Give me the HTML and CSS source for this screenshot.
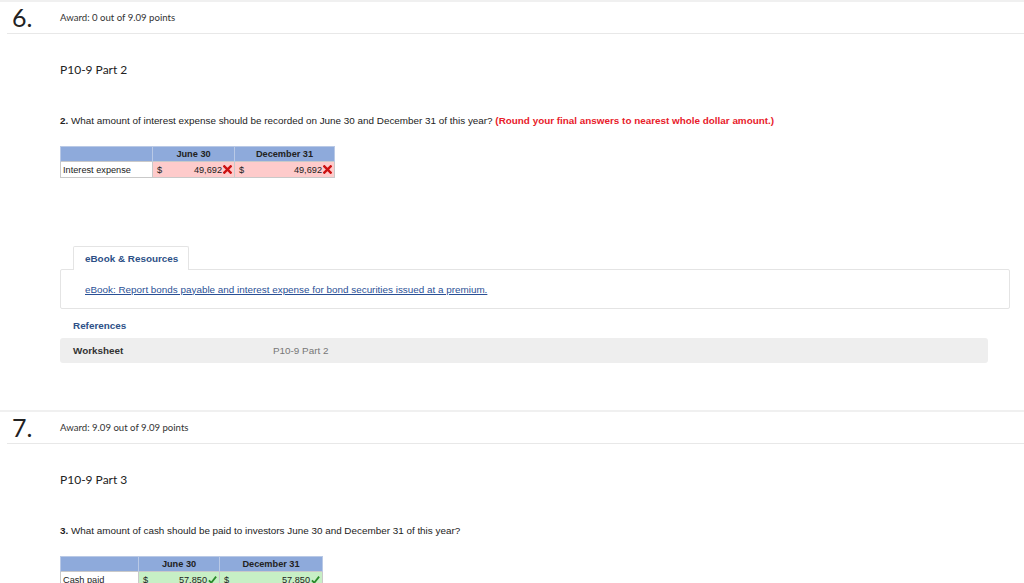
FILE: index.html
```html
<!DOCTYPE html>
<html>
<head>
<meta charset="utf-8">
<link rel="stylesheet" href="styles.css">
</head>
<body>
<section class="q">
  <div class="q-head"><span class="q-num">6.</span><span class="award">Award: 0 out of 9.09 points</span></div>
  <div class="q-body">
    <h2 class="title">P10-9 Part 2</h2>
    <p class="question"><b>2.</b> What amount of interest expense should be recorded on June 30 and December 31 of this year? <span class="note">(Round your final answers to nearest whole dollar amount.)</span></p>
    <table class="grid grid-a">
      <tr class="hdr"><th></th><th>June 30</th><th>December 31</th></tr>
      <tr>
        <td class="label">Interest expense</td>
        <td class="val wrong"><span class="cur">$</span><span class="num">49,692</span><svg class="mark" viewBox="0 0 10 10"><path d="M1.5 1.5 L8.5 8.5 M8.5 1.5 L1.5 8.5" stroke="#cc1111" stroke-width="2.6" stroke-linecap="square"/></svg></td>
        <td class="val wrong"><span class="cur">$</span><span class="num">49,692</span><svg class="mark" viewBox="0 0 10 10"><path d="M1.5 1.5 L8.5 8.5 M8.5 1.5 L1.5 8.5" stroke="#cc1111" stroke-width="2.6" stroke-linecap="square"/></svg></td>
      </tr>
    </table>
    <div class="tabs"><div class="tab">eBook &amp; Resources</div></div>
    <div class="panel"><a class="link" href="#">eBook: Report bonds payable and interest expense for bond securities issued at a premium.</a></div>
    <div class="refs">References</div>
    <div class="ws"><span class="ws-k">Worksheet</span><span class="ws-v">P10-9 Part 2</span></div>
  </div>
</section>
<section class="q">
  <div class="q-head"><span class="q-num">7.</span><span class="award">Award: 9.09 out of 9.09 points</span></div>
  <div class="q-body">
    <h2 class="title">P10-9 Part 3</h2>
    <p class="question"><b>3.</b> What amount of cash should be paid to investors June 30 and December 31 of this year?</p>
    <table class="grid grid-b">
      <tr class="hdr"><th></th><th>June 30</th><th>December 31</th></tr>
      <tr>
        <td class="label">Cash paid</td>
        <td class="val right"><span class="cur">$</span><span class="num">57,850</span><svg class="mark" viewBox="0 0 10 10"><path d="M1 6 L3.6 8.6 L9 1.8" fill="none" stroke="#2a8a2a" stroke-width="2"/></svg></td>
        <td class="val right"><span class="cur">$</span><span class="num">57,850</span><svg class="mark" viewBox="0 0 10 10"><path d="M1 6 L3.6 8.6 L9 1.8" fill="none" stroke="#2a8a2a" stroke-width="2"/></svg></td>
      </tr>
    </table>
  </div>
</section>
</body>
</html>
```
FILE: styles.css
```css
html, body {
  margin: 0;
  padding: 0;
  background: #fff;
  overflow: hidden;
}
body {
  font-family: "Liberation Sans", Arial, sans-serif;
  color: #222;
}
.q {
  border-top: 2px solid #f0f0f0;
}
.q-head {
  display: flex;
  align-items: center;
  height: 31px;
  margin-left: 7px;
  border-bottom: 1px solid #e8e8e8;
}
.q-num {
  width: 48px;
  padding-left: 5px;
  font-family: "Lato", "Open Sans", sans-serif;
  font-weight: 400;
  font-size: 25px;
  color: #222;
  line-height: 1;
}
.award {
  font-family: "Lato", "Open Sans", sans-serif;
  font-size: 9.6px;
  color: #333;
}
.q-body {
  padding: 0 14px 0 60px;
}
.title {
  margin: 28px 0 0;
  font-family: "Lato", "Open Sans", sans-serif;
  font-weight: 400;
  font-size: 12px;
  line-height: 16px;
  color: #222;
}
.question {
  margin: 36px 0 0;
  font-size: 9.9px;
  line-height: 14px;
  color: #222;
}
.note {
  color: #e8202a;
  font-weight: bold;
}
.grid {
  margin-top: 18px;
  border-collapse: collapse;
  font-size: 9.2px;
  table-layout: fixed;
}
.grid-a { width: 271px; }
.grid-a th:nth-child(1) { width: 91px; }
.grid-a th:nth-child(2) { width: 81px; }
.grid-a th:nth-child(3) { width: 99px; }
.grid-b { width: 259px; }
.grid-b th:nth-child(1) { width: 77px; }
.grid-b th:nth-child(2) { width: 80px; }
.grid-b th:nth-child(3) { width: 102px; }
.hdr th {
  background: #8eaadb;
  height: 14px;
  padding: 0;
  font-weight: bold;
  color: #222;
  border: 1px solid #b9c9e6;
  border-bottom: none;
}
.grid td {
  height: 15px;
  padding: 0 2px;
  border: 1px solid #c9c9c9;
  white-space: nowrap;
}
.label {
  background: #fff;
}
.val { text-align: right; }
.val .cur { float: left; padding-left: 2px; }
.val .mark { display: inline-block; width: 9px; height: 9px; margin-left: 1px; vertical-align: -1px; }
.wrong { background: #fecbcb; }
.right { background: #c7efc5; }
.tabs {
  margin-top: 67px;
  padding-left: 13px;
  display: flex;
}
.tab {
  width: 116px;
  height: 24px;
  box-sizing: border-box;
  border: 1px solid #e4e4e4;
  border-bottom: none;
  background: #fff;
  border-radius: 2px 2px 0 0;
  padding: 0 0 0 11px;
  line-height: 24px;
  font-size: 9.9px;
  font-weight: bold;
  color: #2d5087;
  position: relative;
  top: 1px;
}
.panel {
  height: 40px;
  box-sizing: border-box;
  border: 1px solid #e4e4e4;
  border-radius: 2px;
  padding-left: 24px;
  display: flex;
  align-items: center;
}
.link {
  font-size: 9.9px;
  color: #2a5096;
  text-decoration: underline;
}
.refs {
  margin-top: 10px;
  padding-left: 13px;
  line-height: 14px;
  font-size: 9.9px;
  font-weight: bold;
  color: #2d5087;
}
.ws {
  margin: 5px 22px 47px 0;
  height: 25px;
  background: #eeeeee;
  border-radius: 3px;
  display: flex;
  align-items: center;
  padding-left: 13px;
  font-size: 9.9px;
}
.ws-k {
  width: 200px;
  font-weight: bold;
  color: #333;
}
.ws-v {
  color: #777;
}
```
